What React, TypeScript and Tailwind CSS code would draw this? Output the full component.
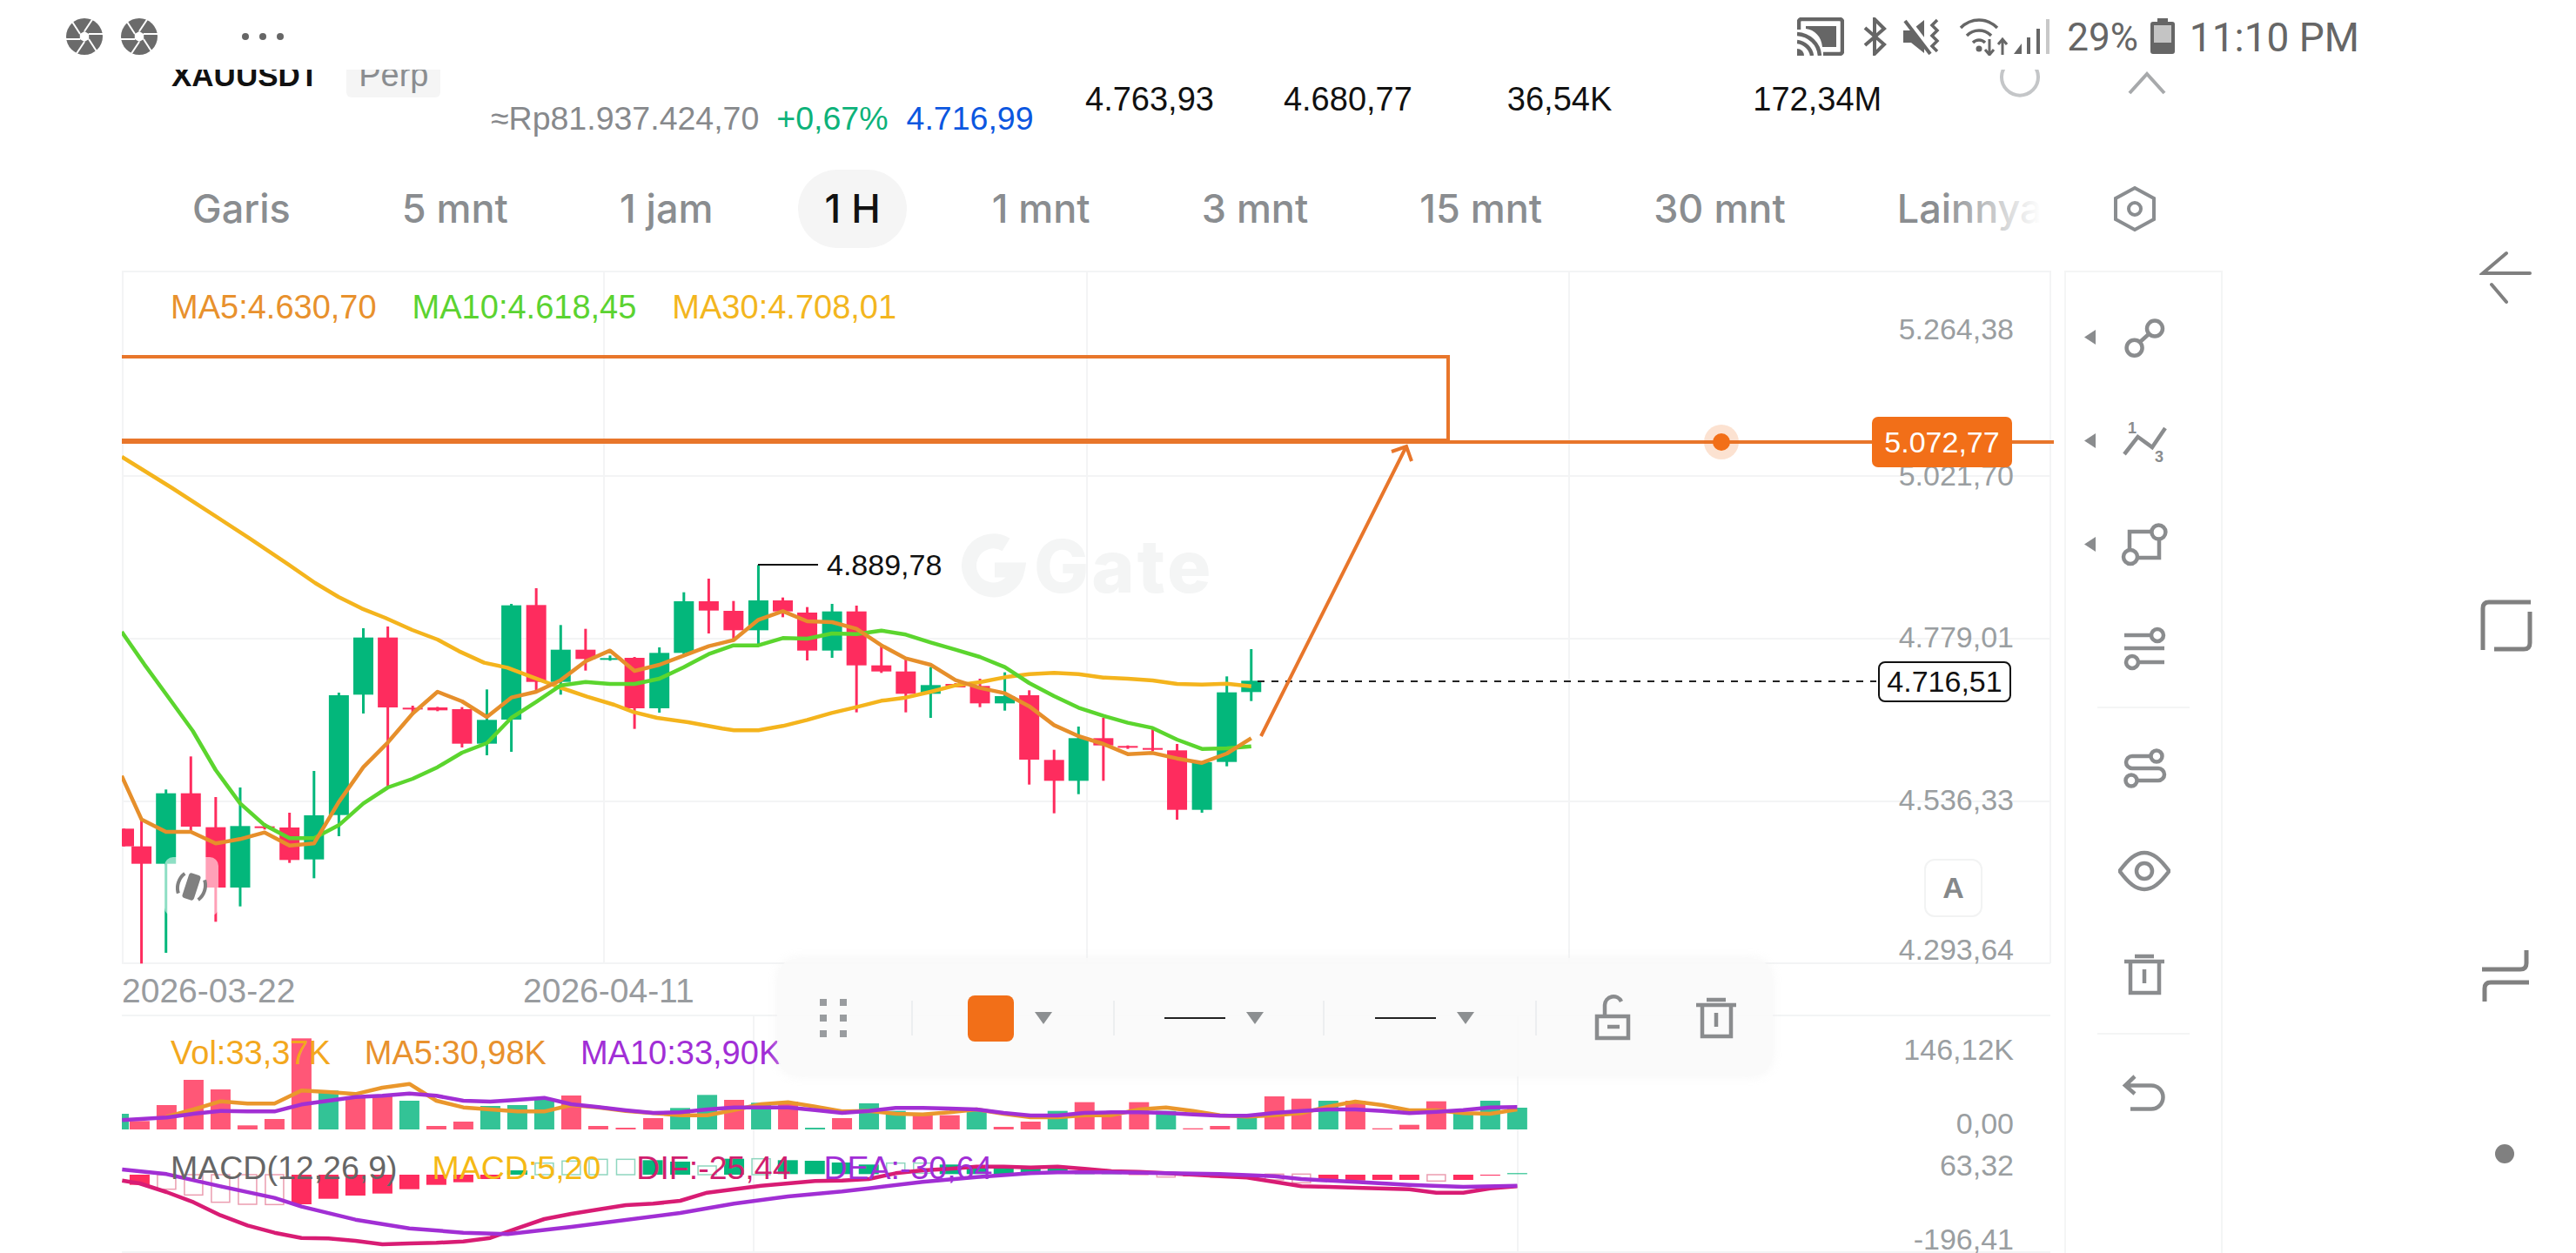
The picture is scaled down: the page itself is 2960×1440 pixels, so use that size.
import { Fragment } from "react";

type Pt = [number, number];
type Candle = [number, number, number, number, number, "r" | "g"]; // x, wickTop, wickBot, bodyTop, bodyBot

// chart numbers were read off crops, so each stretch has its own mapping to page px
const fromA = ([x, y]: Pt): Pt => [130 + x / 2.24, 620 + y / 3];
const fromB = ([x, y]: Pt): Pt => [800 + x / 1.96, 620 + y / 3];
const fromC = ([x, y]: Pt): Pt => [130 + x / 1.742, 1100 + y / 3];
const fromD = ([x, y]: Pt): Pt => [880 + x / 1.742, 1100 + y / 3];

const line = (pts: Pt[]) => pts.map((p) => p.join(",")).join(" ");

const candlesA: Candle[] = [
  [28, 997, 1058, 997, 1058, "r"],
  [73, 960, 1462, 1058, 1118, "r"],
  [136, 862, 1425, 875, 1118, "g"],
  [200, 748, 1005, 875, 990, "r"],
  [264, 888, 1318, 992, 1200, "r"],
  [327, 855, 1265, 988, 1200, "g"],
  [390, 978, 1000, 989, 992, "r"],
  [454, 942, 1115, 993, 1105, "r"],
  [517, 798, 1168, 951, 1103, "g"],
  [581, 528, 1023, 537, 950, "g"],
  [644, 306, 600, 338, 535, "g"],
  [707, 300, 852, 338, 579, "r"],
  [771, 573, 605, 580, 584, "r"],
  [835, 577, 592, 579, 589, "r"],
  [898, 578, 717, 585, 704, "r"],
  [962, 517, 744, 622, 704, "g"],
  [1025, 222, 732, 227, 621, "g"],
  [1089, 168, 525, 226, 491, "r"],
  [1152, 295, 535, 380, 491, "g"],
  [1216, 308, 452, 380, 412, "r"],
  [1279, 400, 418, 409, 412, "g"],
  [1342, 405, 653, 408, 582, "r"],
  [1406, 372, 597, 391, 582, "g"],
  [1469, 182, 400, 213, 391, "g"],
  [1533, 135, 324, 213, 245, "r"],
];

const candlesB: Candle[] = [
  [84, 212, 345, 246, 313, "r"],
  [140, 88, 362, 210, 313, "g"],
  [195, 200, 268, 210, 248, "r"],
  [250, 233, 417, 252, 383, "r"],
  [306, 222, 408, 248, 383, "g"],
  [361, 228, 596, 248, 434, "r"],
  [417, 360, 460, 434, 455, "r"],
  [472, 405, 596, 455, 532, "r"],
  [528, 440, 615, 502, 532, "g"],
  [584, 495, 510, 498, 510, "r"],
  [639, 480, 578, 505, 565, "r"],
  [695, 458, 590, 540, 565, "g"],
  [750, 520, 845, 537, 759, "r"],
  [806, 725, 944, 760, 832, "r"],
  [861, 645, 878, 685, 832, "g"],
  [917, 615, 832, 685, 710, "r"],
  [972, 710, 722, 712, 716, "r"],
  [1028, 645, 730, 719, 724, "r"],
  [1083, 705, 966, 727, 932, "r"],
  [1139, 765, 942, 768, 932, "g"],
  [1195, 472, 782, 527, 767, "g"],
  [1250, 378, 557, 487, 526, "g"],
];

const ma30: Pt[] = [
  [140, 525], [198, 561],
  ...([[350, -5], [450, 85], [520, 150], [580, 198], [640, 238], [700, 270], [770, 312], [835, 345], [890, 385], [955, 425], [1015, 442], [1080, 475], [1150, 510], [1220, 542], [1290, 570], [1340, 595], [1400, 615], [1480, 630], [1568, 652]] as Pt[]).map(fromA),
  ...([[85, 658], [140, 658], [195, 643], [250, 622], [305, 598], [361, 578], [417, 556], [472, 545], [528, 525], [584, 503], [639, 492], [695, 475], [750, 464], [806, 460], [861, 464], [917, 476], [972, 480], [1028, 486], [1083, 498], [1139, 500], [1195, 497], [1250, 506]] as Pt[]).map(fromB),
];

const ma10: Pt[] = [
  ...([[22, 318], [80, 430], [140, 540], [205, 660], [264, 795], [327, 910], [390, 985], [454, 1030], [517, 1030], [581, 985], [644, 910], [707, 855], [771, 825], [835, 785], [898, 735], [962, 702], [1025, 615], [1089, 560], [1152, 503], [1216, 491], [1279, 498], [1342, 498], [1406, 480], [1469, 440], [1533, 395]] as Pt[]).map(fromA),
  ...([[84, 365], [140, 365], [195, 340], [250, 342], [306, 324], [361, 326], [417, 314], [472, 328], [528, 355], [584, 380], [639, 405], [695, 440], [750, 495], [806, 540], [861, 580], [917, 608], [972, 632], [1028, 650], [1083, 690], [1139, 722], [1195, 720], [1250, 713]] as Pt[]).map(fromB),
];

const ma5: Pt[] = [
  ...([[22, 815], [73, 965], [136, 1008], [200, 1008], [264, 1048], [327, 1033], [390, 1010], [454, 1055], [517, 1048], [581, 905], [644, 785], [707, 700], [771, 600], [835, 525], [898, 558], [962, 612], [1025, 545], [1089, 525], [1152, 485], [1216, 420], [1279, 383], [1342, 453], [1406, 432], [1469, 400], [1533, 368]] as Pt[]).map(fromA),
  ...([[84, 347], [140, 277], [195, 247], [250, 282], [306, 285], [361, 308], [417, 365], [472, 410], [528, 432], [584, 485], [639, 512], [695, 530], [750, 575], [806, 640], [861, 678], [917, 705], [972, 740], [1028, 736], [1083, 755], [1139, 770], [1195, 738], [1250, 685]] as Pt[]).map(fromB),
];

const volBars: [number, number, "r" | "g"][] = [
  [-2, 540, "g"], [53, 565, "r"], [107, 510, "r"], [161, 423, "r"], [215, 456, "r"], [269, 580, "r"], [323, 558, "r"], [377, 280, "r"], [431, 460, "g"], [485, 480, "r"], [539, 480, "r"], [593, 495, "g"], [647, 582, "r"], [701, 567, "r"], [755, 513, "g"], [809, 510, "g"], [863, 490, "g"], [917, 477, "r"], [971, 582, "r"], [1026, 588, "r"], [1081, 555, "r"], [1135, 520, "g"], [1189, 475, "g"], [1243, 492, "r"], [1297, 502, "g"], [1351, 498, "r"], [1405, 588, "g"], [1459, 555, "r"], [1513, 504, "g"],
];
const volBarsD: [number, number, "r" | "g"][] = [
  [260, 530, "g"], [314, 543, "r"], [368, 545, "r"], [422, 530, "g"], [476, 585, "r"], [530, 567, "r"], [584, 530, "g"], [638, 500, "r"], [692, 545, "r"], [747, 500, "r"], [801, 530, "g"], [855, 590, "r"], [909, 582, "r"], [963, 550, "g"], [1018, 480, "r"], [1072, 488, "r"], [1126, 495, "g"], [1180, 495, "r"], [1234, 590, "r"], [1288, 578, "r"], [1342, 497, "r"], [1396, 535, "g"], [1450, 495, "g"], [1504, 519, "g"],
];

const volMa5: Pt[] = [
  ...([[107, 550], [161, 525], [215, 497], [269, 505], [323, 505], [377, 460], [431, 465], [485, 472], [539, 450], [593, 437], [647, 495], [701, 518], [755, 525], [809, 532], [863, 532], [917, 510], [971, 518], [1026, 530], [1081, 538], [1135, 545], [1189, 545], [1243, 527], [1297, 507], [1351, 500], [1405, 515], [1459, 532]] as Pt[]).map(fromC),
  ...([[206, 530], [260, 540], [314, 542], [368, 535], [422, 525], [476, 540], [530, 552], [584, 552], [638, 545], [692, 545], [747, 525], [801, 518], [855, 530], [909, 545], [963, 550], [1018, 545], [1072, 538], [1126, 515], [1180, 498], [1234, 510], [1288, 528], [1342, 528], [1396, 538], [1450, 540], [1504, 525]] as Pt[]).map(fromD),
];
const volMa10: Pt[] = [
  ...([[18, 562], [107, 553], [161, 540], [215, 530], [269, 532], [323, 532], [377, 508], [431, 495], [485, 482], [539, 478], [593, 470], [647, 478], [701, 495], [755, 498], [809, 492], [863, 485], [917, 507], [971, 517], [1026, 528], [1081, 537], [1135, 535], [1189, 525], [1243, 518], [1297, 518], [1351, 518], [1405, 527], [1459, 537], [1513, 530]] as Pt[]).map(fromC),
  ...([[260, 520], [314, 520], [368, 522], [422, 525], [476, 537], [530, 546], [584, 546], [638, 537], [692, 535], [747, 535], [801, 537], [855, 542], [909, 547], [963, 547], [1018, 537], [1072, 530], [1126, 525], [1180, 525], [1234, 530], [1288, 538], [1342, 533], [1396, 527], [1450, 518], [1504, 517]] as Pt[]).map(fromD),
];

// x, top, bottom, colour, hollow
const macdC: [number, number, number, "r" | "g", boolean][] = [
  [53, 750, 785, "r", false], [107, 750, 800, "r", true], [161, 750, 820, "r", true], [215, 750, 845, "r", true], [269, 750, 852, "r", true], [323, 750, 853, "r", true], [377, 750, 852, "r", false], [431, 750, 833, "r", false], [485, 750, 822, "r", false], [539, 750, 815, "r", false], [593, 750, 800, "r", false], [647, 750, 785, "r", false], [701, 750, 776, "r", false], [755, 750, 765, "r", false], [809, 735, 750, "g", false], [863, 710, 750, "g", true], [917, 703, 750, "g", true], [971, 697, 750, "g", true], [1026, 697, 750, "g", true], [1080, 700, 750, "g", false], [1135, 705, 750, "g", false], [1189, 720, 750, "g", true], [1243, 695, 750, "g", false], [1297, 695, 750, "g", true],
];
const macdD: [number, number, number, "r" | "g", boolean][] = [
  [44, 700, 748, "g", false], [98, 702, 748, "g", false], [152, 708, 748, "g", false], [206, 715, 748, "g", false], [260, 710, 745, "g", true], [314, 710, 745, "g", true], [368, 715, 748, "g", false], [422, 720, 748, "g", false], [476, 722, 748, "g", false], [530, 725, 745, "g", false], [584, 728, 745, "g", false], [638, 738, 748, "g", false], [692, 745, 748, "g", false], [746, 748, 751, "r", false], [801, 748, 758, "r", true], [855, 748, 756, "r", false], [909, 748, 760, "r", false], [963, 748, 762, "r", false], [1018, 748, 768, "r", true], [1072, 748, 778, "r", true], [1126, 750, 768, "r", false], [1180, 750, 770, "r", false], [1234, 750, 768, "r", false], [1288, 750, 768, "r", false], [1342, 750, 772, "r", true], [1396, 750, 768, "r", false], [1450, 750, 752, "r", false], [1504, 745, 748, "g", false],
];

const dea: Pt[] = [
  ...([[18, 732], [107, 748], [215, 790], [323, 830], [377, 860], [485, 905], [593, 935], [701, 950], [790, 955], [917, 930], [1135, 882], [1243, 850], [1351, 825], [1459, 808]] as Pt[]).map(fromC),
  ...([[206, 797], [314, 775], [422, 758], [530, 745], [584, 742], [692, 742], [800, 745], [909, 748], [1018, 755], [1072, 765], [1180, 775], [1288, 785], [1396, 792], [1504, 788]] as Pt[]).map(fromD),
];
const dif: Pt[] = [
  ...([[18, 770], [53, 780], [107, 810], [161, 845], [215, 890], [269, 925], [323, 950], [377, 968], [431, 970], [485, 978], [539, 990], [593, 987], [647, 985], [701, 980], [755, 968], [809, 935], [863, 903], [917, 885], [971, 870], [1026, 855], [1081, 850], [1135, 840], [1189, 812], [1243, 800], [1297, 788], [1351, 780], [1405, 772], [1459, 770]] as Pt[]).map(fromC),
  ...([[206, 765], [260, 745], [314, 735], [368, 730], [422, 722], [476, 722], [530, 725], [584, 722], [638, 730], [692, 738], [747, 740], [801, 745], [855, 750], [909, 755], [963, 760], [1018, 775], [1072, 790], [1126, 792], [1180, 795], [1288, 800], [1342, 812], [1396, 812], [1450, 797], [1504, 790]] as Pt[]).map(fromD),
];

const axisLabels: [string, number][] = [
  ["5.264,38", 378], ["5.021,70", 546], ["4.779,01", 732], ["4.536,33", 919], ["4.293,64", 1091],
  ["146,12K", 1206], ["0,00", 1291], ["63,32", 1339], ["-196,41", 1424],
];

const tabs = ["Garis", "5 mnt", "1 jam", "1 H", "1 mnt", "3 mnt", "15 mnt", "30 mnt", "Lainnya"];

const RED = "#fe2c5e";
const GREEN = "#03b77b";

function CandleMark({ c, map }: { c: Candle; map: (p: Pt) => Pt }) {
  const [x, wt] = map([c[0], c[1]]);
  const [, wb] = map([c[0], c[2]]);
  const [, bt] = map([c[0], c[3]]);
  const [, bb] = map([c[0], c[4]]);
  const fill = c[5] === "r" ? RED : GREEN;
  return (
    <g>
      <rect x={x - 1.5} y={wt} width={3} height={wb - wt} fill={fill} />
      <rect x={x - 11.5} y={bt} width={23} height={Math.max(bb - bt, 2)} fill={fill} />
    </g>
  );
}

function ChartSvg() {
  const vl = (x: number, y1: number, y2: number) => <line x1={x} x2={x} y1={y1} y2={y2} />;
  const hl = (y: number, x2 = 2356) => <line x1={140} x2={x2} y1={y} y2={y} />;
  return (
    <svg viewBox="140 311 2220 1129" className="block w-[2220px] h-[1129px] font-['Liberation_Sans',sans-serif]">
      {/* grid */}
      <g stroke="#f3f4f5" strokeWidth={2}>
        {hl(312)}
        {hl(547)}
        {hl(734)}
        {hl(921)}
        {hl(1107)}
        {hl(1167)}
        {hl(1439)}
        {vl(141, 311, 1107)}
        {vl(694, 311, 1107)}
        {vl(1249, 311, 1107)}
        {vl(1803, 311, 1107)}
        {vl(2356, 311, 1107)}
        {vl(866, 1167, 1439)}
        {vl(1744, 1167, 1439)}
      </g>

      {/* watermark */}
      <g fill="#f4f5f5" stroke="#f4f5f5">
        <path d="M1156 626 A28 28 0 1 0 1169 655 L1143 655" fill="none" strokeWidth={17} />
        <text x={1188} y={681} fontSize={84} fontWeight={800} letterSpacing={3} stroke="none" fontFamily="Inter, sans-serif">Gate</text>
      </g>

      {/* candles */}
      {candlesA.map((c) => <CandleMark key={c[0]} c={c} map={fromA} />)}
      {candlesB.map((c) => <CandleMark key={c[0]} c={c} map={fromB} />)}

      {/* high marker */}
      <path d="M871 649 H940" stroke="#111" strokeWidth={2} fill="none" />
      <text x={950} y={661} fontSize={34} fill="#111">4.889,78</text>

      <polyline points={line(ma30)} fill="none" stroke="#f4b41d" strokeWidth={4.5} strokeLinejoin="round" />
      <polyline points={line(ma10)} fill="none" stroke="#5bd52e" strokeWidth={4.5} strokeLinejoin="round" />
      <polyline points={line(ma5)} fill="none" stroke="#e68f2b" strokeWidth={4.5} strokeLinejoin="round" />

      {/* last price line */}
      <line x1={1445} x2={2156} y1={783} y2={783} stroke="#222" strokeWidth={2} strokeDasharray="8 8" />

      {/* drawn shapes */}
      <g stroke="#e8762b" fill="none">
        <path d="M140 410 H1664 V507" strokeWidth={4} />
        <path d="M140 507 H1664" strokeWidth={6} />
        <path d="M1664 508 H2360" strokeWidth={4} />
        <path d="M1449 846 L1616 513 M1599 519 L1616 513 L1622 530" strokeWidth={4} />
      </g>
      <circle cx={1978} cy={508} r={20} fill="#f26f18" fillOpacity={0.2} />
      <circle cx={1978} cy={508} r={10} fill="#f26f18" />

      {/* date axis */}
      <text x={140} y={1152} fontSize={39} fill="#999c9f">2026-03-22</text>
      <text x={601} y={1152} fontSize={39} fill="#999c9f">2026-04-11</text>

      {/* volume */}
      {volBars.map(([x, y, k]) => {
        const [px, py] = fromC([x, y]);
        return <rect key={x} x={Math.max(px - 11.5, 140)} y={py} width={x < 0 ? 8 : 23} height={1298 - py} fill={k === "r" ? "#ff5777" : "#33c396"} />;
      })}
      {volBarsD.map(([x, y, k]) => {
        const [px, py] = fromD([x, y]);
        return <rect key={x} x={px - 11.5} y={py} width={23} height={1298 - py} fill={k === "r" ? "#ff5777" : "#33c396"} />;
      })}
      <polyline points={line(volMa5)} fill="none" stroke="#ea972c" strokeWidth={4.5} strokeLinejoin="round" />
      <polyline points={line(volMa10)} fill="none" stroke="#a12fd4" strokeWidth={4.5} strokeLinejoin="round" />

      {/* macd */}
      {[{ rows: macdC, map: fromC }, { rows: macdD, map: fromD }].map(({ rows, map }) => (
        <Fragment key={rows.length}>
          {rows.map(([x, t, b, k, hollow]) => {
            const [px, pt] = map([x, t]);
            const [, pb] = map([x, b]);
            const col = k === "r" ? RED : GREEN;
            return hollow ? (
              <rect key={x} x={px - 10.5} y={pt} width={21} height={pb - pt} fill="none" stroke={k === "r" ? "#eb9db0" : "#8fd6bf"} strokeWidth={1.5} />
            ) : (
              <rect key={x} x={px - 11.5} y={pt} width={23} height={Math.max(pb - pt, 1)} fill={col} />
            );
          })}
        </Fragment>
      ))}
      <polyline points={line(dif)} fill="none" stroke="#d81c74" strokeWidth={4.5} strokeLinejoin="round" />
      <polyline points={line(dea)} fill="none" stroke="#a12fd4" strokeWidth={4.5} strokeLinejoin="round" />

      {/* right axis */}
      {axisLabels.map(([t, y]) => (
        <text key={t} x={2314} y={y + 12} textAnchor="end" fontSize={34} fill="#9a9ea1">{t}</text>
      ))}
    </svg>
  );
}

function Aperture() {
  return (
    <svg width="42" height="42" viewBox="0 0 42 42">
      <circle cx="21" cy="21" r="21" fill="#6b6b6b" />
      <g stroke="#fff" strokeWidth="2" fill="none">
        <path d="M21 15 L31 0" />
        <path d="M26 18 L42 18" />
        <path d="M26 24 L35 38" />
        <path d="M21 27 L11 42" />
        <path d="M16 24 L0 24" />
        <path d="M16 18 L7 4" />
      </g>
      <polygon points="21,15 26.2,18 26.2,24 21,27 15.8,24 15.8,18" fill="#fff" />
    </svg>
  );
}

function StatusBar() {
  const grey = "#666666";
  return (
    <div className="flex h-[80px] items-center justify-between pl-[76px] pr-[89px] pt-[3px] text-[#666] font-['Roboto',sans-serif]">
      <div className="flex items-center">
        <Aperture />
        <div className="ml-[21px]"><Aperture /></div>
        <div className="ml-[97px] flex gap-[12px]">
          <span className="size-[8px] rounded-full bg-[#666]" />
          <span className="size-[8px] rounded-full bg-[#666]" />
          <span className="size-[8px] rounded-full bg-[#666]" />
        </div>
      </div>
      <div className="flex items-center">
        <svg width="54" height="44" viewBox="0 0 54 44" fill="none" stroke={grey} strokeWidth="4.5">
          <path d="M2 14 V5 a3 3 0 0 1 3-3 H49 a3 3 0 0 1 3 3 V39 a3 3 0 0 1-3 3 H30" />
          <path d="M10 10 H45 V34 H29 C28 22 20 14 10 13 Z" fill={grey} stroke="none" />
          <path d="M0 19 C14 20 25 30 26 44" />
          <path d="M0 28 C9 29 16 36 17 44" />
          <path d="M0 36 a8 8 0 0 1 8 8 H0 Z" fill={grey} stroke="none" />
        </svg>
        <svg className="ml-[21px]" width="28" height="44" viewBox="0 0 28 44" fill="none" stroke={grey} strokeWidth="4">
          <path d="M3 12 L25 31 L14 42 V2 L25 13 L3 32" />
        </svg>
        <svg className="ml-[19px]" width="45" height="42" viewBox="0 0 45 42" fill="none">
          <path d="M0 14 H9 L24 2 V40 L9 28 H0 Z" fill={grey} />
          <path d="M3 0 L32 38" stroke="#fff" strokeWidth="7" />
          <path d="M2 3 L31 41" stroke={grey} strokeWidth="4" />
          <path d="M39 2 l-6 6 6 6 -6 6 6 6 -6 6 6 6" stroke={grey} strokeWidth="3.5" />
        </svg>
        <svg className="ml-[19px]" width="56" height="44" viewBox="0 0 56 44" fill="none" stroke={grey} strokeWidth="3.5">
          <path d="M2 12 C14 0 32 0 44 12" />
          <path d="M9 21 C17 13 29 13 37 21" />
          <path d="M16 29 C20 25 26 25 30 29" />
          <circle cx="23" cy="36" r="3.5" fill={grey} stroke="none" />
          <path d="M35 25 V43 M30 37 L35 43 L40 37" strokeWidth="3" />
          <path d="M50 43 V26 M45 31 L50 25 L55 31" strokeWidth="3" />
        </svg>
        <svg className="ml-[7px]" width="41" height="40" viewBox="0 0 41 40">
          <polygon points="0,40 9,40 9,28" fill={grey} />
          <rect x="15" y="21" width="4" height="19" fill={grey} />
          <rect x="26" y="11" width="4" height="29" fill={grey} />
          <rect x="37" y="0" width="4" height="40" fill="#c8c8c8" />
        </svg>
        <span className="ml-[20px] pt-[3px] text-[44px] leading-none">29%</span>
        <svg className="ml-[13px]" width="30" height="41" viewBox="0 0 30 41">
          <rect x="9" y="0" width="12" height="5" fill={grey} />
          <rect x="1" y="4" width="28" height="37" rx="3" fill={grey} />
          <rect x="5" y="8" width="20" height="20" fill="#c4c4c4" />
        </svg>
        <span className="ml-[16px] pt-[3px] text-[46px] leading-none">11:10 PM</span>
      </div>
    </div>
  );
}

function Header() {
  return (
    <div className="relative flex h-[110px] items-start overflow-hidden pl-[197px] text-[37.5px] font-['Liberation_Sans',sans-serif]">
      <div className="w-[1050px] shrink-0">
        <div className="-mt-[13px] flex h-[40px] items-center">
          <span className="text-[35px] font-bold leading-[40px] text-[#111]">XAUUSDT</span>
          <span className="ml-[32px] rounded-[6px] bg-[#f5f5f5] px-[14px] pb-[6px] pt-[4px] text-[38px] leading-[40px] text-[#8a8d90]">Perp</span>
        </div>
        <div className="mt-[7px] flex pl-[367px] leading-[44px]">
          <span className="text-[#87898c]">≈Rp81.937.424,70</span>
          <span className="ml-[20px] text-[#0db27a]">+0,67%</span>
          <span className="ml-[21px] text-[#0c57e0]">4.716,99</span>
        </div>
      </div>
      <div className="mt-[12px] flex text-[38px] leading-[44px] text-[#111]">
        <span>4.763,93</span>
        <span className="ml-[80px]">4.680,77</span>
        <span className="ml-[109px]">36,54K</span>
        <span className="ml-[162px]">172,34M</span>
      </div>
      <svg className="absolute left-[2296px] top-0" width="50" height="34" viewBox="0 0 50 34" fill="none" stroke="#c4c6c8" strokeWidth="4">
        <path d="M39 -7 A21 21 0 1 1 11 -7" />
      </svg>
      <svg className="absolute left-[2444px] top-0" width="46" height="30" viewBox="0 0 46 30" fill="none" stroke="#a7a9ab" strokeWidth="4">
        <path d="M3 27 L23 5 L43 27" />
      </svg>
    </div>
  );
}

function TabStrip() {
  return (
    <div className="relative flex h-[121px] items-center pb-[21px] pl-[191px] font-['Inter',sans-serif] text-[45px] font-medium">
      <div className="flex items-center gap-[68px]">
        {tabs.map((t) => (
          <div
            key={t}
            className={`flex h-[90px] items-center whitespace-nowrap rounded-[45px] px-[30px] ${t === "1 H" ? "bg-[#f5f5f5] text-[#111]" : "text-[#8a8d90]"}`}
          >
            {t}
          </div>
        ))}
      </div>
      <div className="absolute left-[2230px] top-0 h-full w-[115px] bg-gradient-to-r from-transparent to-white" />
      <svg className="absolute left-[2428px] top-[23px]" width="50" height="54" viewBox="0 0 50 54" fill="none" stroke="#8a8d90" strokeWidth="4">
        <polygon points="25,3 47,15 47,39 25,51 3,39 3,15" />
        <circle cx="25" cy="27" r="7" />
      </svg>
    </div>
  );
}

function DragDots() {
  return (
    <div className="grid grid-cols-2 gap-x-[15px] gap-y-[10px]">
      {[0, 1, 2, 3, 4, 5].map((i) => <span key={i} className="size-[8px] bg-[#999c9f]" />)}
    </div>
  );
}

function Caret({ className = "" }: { className?: string }) {
  return (
    <svg className={className} width="20" height="14" viewBox="0 0 20 14">
      <polygon points="0,0 20,0 10,14" fill="#8c8f91" />
    </svg>
  );
}

function TrashIcon() {
  return (
    <svg width="60" height="60" viewBox="0 0 60 60" fill="none" stroke="#8a8c8e" strokeWidth="4.5">
      <path d="M19 9 H41 M7 15 H53 M14 15 V51 H47 V15 M30 24 V40" />
    </svg>
  );
}

function DrawToolbar() {
  return (
    <div className="absolute left-[753px] top-[790px] flex h-[136px] w-[1144px] items-center rounded-[24px] bg-[#f9fafa]/90 pl-[49px] pt-[2px] shadow-[0_0_12px_rgba(240,240,240,0.6)]">
      <DragDots />
      <div className="ml-[74px] h-[40px] w-[2px] bg-[#eceef0]" />
      <div className="ml-[63px] h-[53px] w-[53px] rounded-[8px] bg-[#f26f18]" />
      <Caret className="ml-[24px]" />
      <div className="ml-[70px] h-[40px] w-[2px] bg-[#eceef0]" />
      <div className="ml-[57px] h-[2px] w-[70px] bg-[#222]" />
      <Caret className="ml-[24px]" />
      <div className="ml-[68px] h-[40px] w-[2px] bg-[#eceef0]" />
      <div className="ml-[58px] h-[2px] w-[70px] bg-[#222]" />
      <Caret className="ml-[24px]" />
      <div className="ml-[70px] h-[40px] w-[2px] bg-[#eceef0]" />
      <svg className="ml-[57px]" width="60" height="60" viewBox="0 0 60 60" fill="none" stroke="#8a8c8e" strokeWidth="4.5">
        <rect x="12" y="28" width="36" height="25" />
        <path d="M21 28 V15 a10 10 0 0 1 19 -4 M24 40 H38" />
      </svg>
      <div className="ml-[59px]"><TrashIcon /></div>
    </div>
  );
}

function ChartPanel() {
  return (
    <div className="relative h-[1129px] w-[2220px] shrink-0 font-['Liberation_Sans',sans-serif]">
      <ChartSvg />
      <div className="absolute left-[56px] top-[20px] flex gap-[41px] text-[38px] leading-[44px]">
        <span className="text-[#e8912d]">MA5:4.630,70</span>
        <span className="text-[#5bd331]">MA10:4.618,45</span>
        <span className="text-[#f3b61f]">MA30:4.708,01</span>
      </div>
      <div className="absolute left-[56px] top-[877px] flex gap-[39px] text-[38px] leading-[44px]">
        <span className="text-[#f3a81e]">Vol:33,37K</span>
        <span className="text-[#e8912d]">MA5:30,98K</span>
        <span className="text-[#a12ed6]">MA10:33,90K</span>
      </div>
      <div className="absolute left-[56px] top-[1009px] flex text-[37.5px] leading-[44px]">
        <span className="text-[#666]">MACD(12,26,9)</span>
        <span className="ml-[40px] text-[#f5b915]">MACD:5,20</span>
        <span className="ml-[41px] text-[#d0206e]">DIF:-25,44</span>
        <span className="ml-[38px] text-[#a12ed6]">DEA:-30,64</span>
      </div>

      <div className="absolute left-[2011px] top-[168px] flex h-[58px] w-[161px] items-center justify-center rounded-[7px] bg-[#f26f18] text-[34px] text-white">5.072,77</div>
      <div className="absolute left-[2018px] top-[449px] flex h-[47px] w-[153px] items-center justify-center rounded-[8px] border-2 border-[#111] bg-white text-[34px] text-[#111]">4.716,51</div>
      <div className="absolute left-[2071px] top-[676px] flex h-[67px] w-[67px] items-center justify-center rounded-[12px] border-2 border-[#f2f3f3] bg-white text-[34px] font-bold text-[#85888a]">A</div>

      <div className="absolute left-[49px] top-[674px] flex h-[68px] w-[62px] items-center justify-center rounded-[10px] bg-white/55">
        <svg width="36" height="40" viewBox="0 0 36 40" fill="none" stroke="#808080">
          <g transform="rotate(18 18 20)">
            <rect x="11" y="5" width="14" height="30" rx="3" fill="#808080" stroke="none" />
            <path d="M6 8 C1 15 1 25 6 32 M30 8 C35 15 35 25 30 32" strokeWidth="4" />
          </g>
        </svg>
      </div>

      <DrawToolbar />
    </div>
  );
}

function RailItem({ arrow, children }: { arrow?: boolean; children: React.ReactNode }) {
  return (
    <div className="relative flex h-[119px] items-center justify-center pl-[2px]">
      {arrow && (
        <svg className="absolute left-[21px] top-[51px]" width="13" height="17" viewBox="0 0 13 17">
          <polygon points="13,0 13,17 0,8.5" fill="#8a8c8e" />
        </svg>
      )}
      {children}
    </div>
  );
}

function ToolRail() {
  const icon = { width: 60, height: 60, viewBox: "0 0 60 60", fill: "none", stroke: "#8a8c8e", strokeWidth: 4.5 };
  return (
    <div className="ml-[12px] w-[182px] shrink-0 self-stretch border-x-2 border-t-2 border-[#f4f5f5] pt-[15px] font-['Liberation_Sans',sans-serif]">
      <RailItem arrow>
        <svg {...icon}>
          <circle cx="18.6" cy="41.7" r="9" />
          <circle cx="42" cy="19.6" r="9" />
          <path d="M25 35 L35 26" />
        </svg>
      </RailItem>
      <RailItem arrow>
        <svg {...icon}>
          <path d="M7 45 L22.5 25 L39 37 L54 15" />
          <text x="11" y="21" fontSize="18" fontWeight="700" fill="#8a8c8e" stroke="none">1</text>
          <text x="42" y="54" fontSize="18" fontWeight="700" fill="#8a8c8e" stroke="none">3</text>
        </svg>
      </RailItem>
      <RailItem arrow>
        <svg {...icon}>
          <circle cx="46.4" cy="15.6" r="8" />
          <circle cx="14" cy="44" r="8" />
          <path d="M13 36 V15 H38 M22 45 H47 V24" />
        </svg>
      </RailItem>
      <RailItem>
        <svg {...icon}>
          <path d="M7 15 H38 M7 30 H53 M24 46 H53" />
          <circle cx="45" cy="15" r="7" />
          <circle cx="16" cy="46" r="7" />
        </svg>
      </RailItem>
      <div className="mx-auto my-[8px] h-[2px] w-[106px] bg-[#f4f5f5]" />
      <RailItem>
        <svg {...icon}>
          <circle cx="44" cy="17" r="6.5" />
          <circle cx="15" cy="45" r="6.5" />
          <path d="M37 17 H16 a7 7 0 0 0 0 14 H46 a7 7 0 0 1 0 14 H22" />
        </svg>
      </RailItem>
      <RailItem>
        <svg {...icon}>
          <path d="M1.5 30 C12 16 20 9 30 9 S48 16 58.5 30 C48 44 40 51 30 51 S12 44 1.5 30 Z" />
          <circle cx="30" cy="30" r="9" />
        </svg>
      </RailItem>
      <RailItem><TrashIcon /></RailItem>
      <div className="mx-auto my-[8px] h-[2px] w-[106px] bg-[#f4f5f5]" />
      <RailItem>
        <svg {...icon}>
          <path d="M9 20.5 H38 a13.5 13.5 0 0 1 0 27 H14 M19 10 L8 20.5 L19 30" />
        </svg>
      </RailItem>
    </div>
  );
}

function NavColumn() {
  const props = { fill: "none", stroke: "#808080", strokeWidth: 5 };
  return (
    <div className="flex w-[160px] shrink-0 flex-col items-center pt-[288px]">
      <svg width="62" height="62" viewBox="0 0 62 62" {...props} strokeWidth={4}>
        <path d="M31 3 L4 26 H58 M14 39 L31 59" strokeLinecap="round" />
      </svg>
      <svg className="mt-[339px]" width="60" height="60" viewBox="0 0 60 60" {...props}>
        <path d="M3 58 V10 Q3 3 10 3 H58 M57 14 V50 Q57 57 50 57 H16" />
      </svg>
      <svg className="mt-[342px]" width="60" height="60" viewBox="0 0 60 60" {...props}>
        <path d="M53 1 V16 Q53 23 46 23 H2 M56 38 H12 Q5 38 5 45 V60" />
      </svg>
      <span className="ml-[-4px] mt-[164px] size-[22px] rounded-full bg-[#808080]" />
    </div>
  );
}

export default function App() {
  return (
    <div className="flex h-[1440px] w-[2960px] overflow-hidden bg-white">
      <div className="flex w-[2800px] shrink-0 flex-col">
        <StatusBar />
        <Header />
        <TabStrip />
        <div className="flex flex-1 pl-[140px]">
          <ChartPanel />
          <ToolRail />
        </div>
      </div>
      <NavColumn />
    </div>
  );
}
